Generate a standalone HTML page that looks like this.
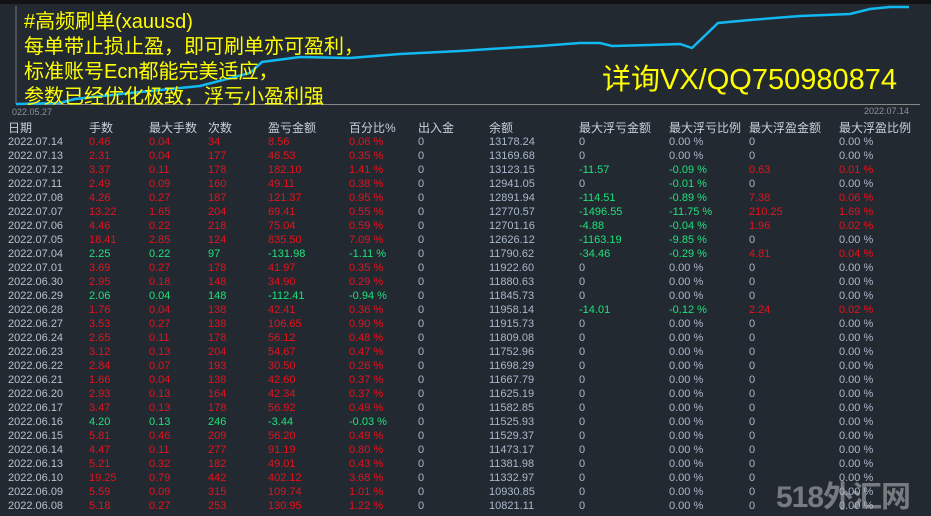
<!DOCTYPE html><html><head><meta charset="utf-8"><style>
body{margin:0;width:931px;height:513px;background:#232931;overflow:hidden;position:relative;font-family:"Liberation Sans","Noto Sans CJK SC",sans-serif}
.top{position:absolute;left:0;top:0;width:931px;height:4px;background:#121212}
.t{position:absolute;left:0;top:121px;width:931px}
.r{height:14px;line-height:14px;font-size:11px;position:relative;color:#a9b8cc;white-space:nowrap}
.r span{position:absolute;top:0}
.h{color:#c8d0dc;font-size:12px}
.c1{left:8px;color:#b7c0cc}.c2{left:89px}.c3{left:149px}.c4{left:208px}.c5{left:268px}.c6{left:349px}.c7{left:418px}.c8{left:489px}.c9{left:579px}.c10{left:669px}.c11{left:749px}.c12{left:839px}
.R .c2,.R .c3,.R .c4,.R .c5,.R .c6{color:#e5121c}
.G .c2,.G .c3,.G .c4,.G .c5,.G .c6{color:#1ee27a}
.g{color:#1ee27a!important}.x{color:#e5121c!important}
.y{position:absolute;color:#ffff00;font-size:20px;left:24px;line-height:25px}
</style></head><body>
<div class="top"></div>
<svg width="931" height="120" style="position:absolute;left:0;top:0">
<line x1="16" y1="6" x2="16" y2="104" stroke="#777" stroke-width="1"/>
<line x1="16" y1="104.5" x2="920" y2="104.5" stroke="#888" stroke-width="1"/>
<polyline fill="none" stroke="#12b8f0" stroke-width="2.5" points="16,104 60,103 75,99 130,93 200,86 250,73 262,62 300,57 350,58 400,54 460,51 490,49 540,46 580,43 600,43 612,46 650,45 680,44 692,48 718,23 750,20 800,16 850,14 870,9 890,7 909,7"/>
<text x="12" y="115" font-size="9" fill="#8a929c" font-family="Liberation Sans">022.05.27</text>
<text x="864" y="114" font-size="9" fill="#8a929c" font-family="Liberation Sans">2022.07.14</text>
</svg>
<div class="y" style="top:10px">#高频刷单(xauusd)</div>
<div class="y" style="top:35px">每单带止损止盈，即可刷单亦可盈利，</div>
<div class="y" style="top:60px">标准账号Ecn都能完美适应，</div>
<div class="y" style="top:85px">参数已经优化极致，浮亏小盈利强</div>
<div style="position:absolute;left:602px;top:62px;color:#ffff00;font-size:29px;line-height:36px">详询VX/QQ750980874</div>
<div class="t">
<div class="r h"><span class="c1" style="color:#c8d0dc">日期</span><span class="c2">手数</span><span class="c3">最大手数</span><span class="c4">次数</span><span class="c5">盈亏金额</span><span class="c6">百分比%</span><span class="c7">出入金</span><span class="c8">余额</span><span class="c9">最大浮亏金额</span><span class="c10">最大浮亏比例</span><span class="c11">最大浮盈金额</span><span class="c12">最大浮盈比例</span></div>
<div class="r R"><span class="c1">2022.07.14</span><span class="c2">0.46</span><span class="c3">0.04</span><span class="c4">34</span><span class="c5">8.56</span><span class="c6">0.06 %</span><span class="c7">0</span><span class="c8">13178.24</span><span class="c9">0</span><span class="c10">0.00 %</span><span class="c11">0</span><span class="c12">0.00 %</span></div>
<div class="r R"><span class="c1">2022.07.13</span><span class="c2">2.31</span><span class="c3">0.04</span><span class="c4">177</span><span class="c5">46.53</span><span class="c6">0.35 %</span><span class="c7">0</span><span class="c8">13169.68</span><span class="c9">0</span><span class="c10">0.00 %</span><span class="c11">0</span><span class="c12">0.00 %</span></div>
<div class="r R"><span class="c1">2022.07.12</span><span class="c2">3.37</span><span class="c3">0.11</span><span class="c4">178</span><span class="c5">182.10</span><span class="c6">1.41 %</span><span class="c7">0</span><span class="c8">13123.15</span><span class="c9 g">-11.57</span><span class="c10 g">-0.09 %</span><span class="c11 x">0.63</span><span class="c12 x">0.01 %</span></div>
<div class="r R"><span class="c1">2022.07.11</span><span class="c2">2.49</span><span class="c3">0.09</span><span class="c4">160</span><span class="c5">49.11</span><span class="c6">0.38 %</span><span class="c7">0</span><span class="c8">12941.05</span><span class="c9">0</span><span class="c10 g">-0.01 %</span><span class="c11">0</span><span class="c12">0.00 %</span></div>
<div class="r R"><span class="c1">2022.07.08</span><span class="c2">4.26</span><span class="c3">0.27</span><span class="c4">187</span><span class="c5">121.37</span><span class="c6">0.95 %</span><span class="c7">0</span><span class="c8">12891.94</span><span class="c9 g">-114.51</span><span class="c10 g">-0.89 %</span><span class="c11 x">7.38</span><span class="c12 x">0.06 %</span></div>
<div class="r R"><span class="c1">2022.07.07</span><span class="c2">13.22</span><span class="c3">1.65</span><span class="c4">204</span><span class="c5">69.41</span><span class="c6">0.55 %</span><span class="c7">0</span><span class="c8">12770.57</span><span class="c9 g">-1496.55</span><span class="c10 g">-11.75 %</span><span class="c11 x">210.25</span><span class="c12 x">1.69 %</span></div>
<div class="r R"><span class="c1">2022.07.06</span><span class="c2">4.46</span><span class="c3">0.22</span><span class="c4">218</span><span class="c5">75.04</span><span class="c6">0.59 %</span><span class="c7">0</span><span class="c8">12701.16</span><span class="c9 g">-4.88</span><span class="c10 g">-0.04 %</span><span class="c11 x">1.96</span><span class="c12 x">0.02 %</span></div>
<div class="r R"><span class="c1">2022.07.05</span><span class="c2">18.41</span><span class="c3">2.85</span><span class="c4">124</span><span class="c5">835.50</span><span class="c6">7.09 %</span><span class="c7">0</span><span class="c8">12626.12</span><span class="c9 g">-1163.19</span><span class="c10 g">-9.85 %</span><span class="c11">0</span><span class="c12">0.00 %</span></div>
<div class="r G"><span class="c1">2022.07.04</span><span class="c2">2.25</span><span class="c3">0.22</span><span class="c4">97</span><span class="c5">-131.98</span><span class="c6">-1.11 %</span><span class="c7">0</span><span class="c8">11790.62</span><span class="c9 g">-34.46</span><span class="c10 g">-0.29 %</span><span class="c11 x">4.81</span><span class="c12 x">0.04 %</span></div>
<div class="r R"><span class="c1">2022.07.01</span><span class="c2">3.69</span><span class="c3">0.27</span><span class="c4">178</span><span class="c5">41.97</span><span class="c6">0.35 %</span><span class="c7">0</span><span class="c8">11922.60</span><span class="c9">0</span><span class="c10">0.00 %</span><span class="c11">0</span><span class="c12">0.00 %</span></div>
<div class="r R"><span class="c1">2022.06.30</span><span class="c2">2.95</span><span class="c3">0.18</span><span class="c4">148</span><span class="c5">34.90</span><span class="c6">0.29 %</span><span class="c7">0</span><span class="c8">11880.63</span><span class="c9">0</span><span class="c10">0.00 %</span><span class="c11">0</span><span class="c12">0.00 %</span></div>
<div class="r G"><span class="c1">2022.06.29</span><span class="c2">2.06</span><span class="c3">0.04</span><span class="c4">148</span><span class="c5">-112.41</span><span class="c6">-0.94 %</span><span class="c7">0</span><span class="c8">11845.73</span><span class="c9">0</span><span class="c10">0.00 %</span><span class="c11">0</span><span class="c12">0.00 %</span></div>
<div class="r R"><span class="c1">2022.06.28</span><span class="c2">1.76</span><span class="c3">0.04</span><span class="c4">138</span><span class="c5">42.41</span><span class="c6">0.36 %</span><span class="c7">0</span><span class="c8">11958.14</span><span class="c9 g">-14.01</span><span class="c10 g">-0.12 %</span><span class="c11 x">2.24</span><span class="c12 x">0.02 %</span></div>
<div class="r R"><span class="c1">2022.06.27</span><span class="c2">3.53</span><span class="c3">0.27</span><span class="c4">138</span><span class="c5">106.65</span><span class="c6">0.90 %</span><span class="c7">0</span><span class="c8">11915.73</span><span class="c9">0</span><span class="c10">0.00 %</span><span class="c11">0</span><span class="c12">0.00 %</span></div>
<div class="r R"><span class="c1">2022.06.24</span><span class="c2">2.65</span><span class="c3">0.11</span><span class="c4">178</span><span class="c5">56.12</span><span class="c6">0.48 %</span><span class="c7">0</span><span class="c8">11809.08</span><span class="c9">0</span><span class="c10">0.00 %</span><span class="c11">0</span><span class="c12">0.00 %</span></div>
<div class="r R"><span class="c1">2022.06.23</span><span class="c2">3.12</span><span class="c3">0.13</span><span class="c4">204</span><span class="c5">54.67</span><span class="c6">0.47 %</span><span class="c7">0</span><span class="c8">11752.96</span><span class="c9">0</span><span class="c10">0.00 %</span><span class="c11">0</span><span class="c12">0.00 %</span></div>
<div class="r R"><span class="c1">2022.06.22</span><span class="c2">2.84</span><span class="c3">0.07</span><span class="c4">193</span><span class="c5">30.50</span><span class="c6">0.26 %</span><span class="c7">0</span><span class="c8">11698.29</span><span class="c9">0</span><span class="c10">0.00 %</span><span class="c11">0</span><span class="c12">0.00 %</span></div>
<div class="r R"><span class="c1">2022.06.21</span><span class="c2">1.66</span><span class="c3">0.04</span><span class="c4">138</span><span class="c5">42.60</span><span class="c6">0.37 %</span><span class="c7">0</span><span class="c8">11667.79</span><span class="c9">0</span><span class="c10">0.00 %</span><span class="c11">0</span><span class="c12">0.00 %</span></div>
<div class="r R"><span class="c1">2022.06.20</span><span class="c2">2.93</span><span class="c3">0.13</span><span class="c4">164</span><span class="c5">42.34</span><span class="c6">0.37 %</span><span class="c7">0</span><span class="c8">11625.19</span><span class="c9">0</span><span class="c10">0.00 %</span><span class="c11">0</span><span class="c12">0.00 %</span></div>
<div class="r R"><span class="c1">2022.06.17</span><span class="c2">3.47</span><span class="c3">0.13</span><span class="c4">178</span><span class="c5">56.92</span><span class="c6">0.49 %</span><span class="c7">0</span><span class="c8">11582.85</span><span class="c9">0</span><span class="c10">0.00 %</span><span class="c11">0</span><span class="c12">0.00 %</span></div>
<div class="r G"><span class="c1">2022.06.16</span><span class="c2">4.20</span><span class="c3">0.13</span><span class="c4">246</span><span class="c5">-3.44</span><span class="c6">-0.03 %</span><span class="c7">0</span><span class="c8">11525.93</span><span class="c9">0</span><span class="c10">0.00 %</span><span class="c11">0</span><span class="c12">0.00 %</span></div>
<div class="r R"><span class="c1">2022.06.15</span><span class="c2">5.81</span><span class="c3">0.46</span><span class="c4">209</span><span class="c5">56.20</span><span class="c6">0.49 %</span><span class="c7">0</span><span class="c8">11529.37</span><span class="c9">0</span><span class="c10">0.00 %</span><span class="c11">0</span><span class="c12">0.00 %</span></div>
<div class="r R"><span class="c1">2022.06.14</span><span class="c2">4.47</span><span class="c3">0.11</span><span class="c4">277</span><span class="c5">91.19</span><span class="c6">0.80 %</span><span class="c7">0</span><span class="c8">11473.17</span><span class="c9">0</span><span class="c10">0.00 %</span><span class="c11">0</span><span class="c12">0.00 %</span></div>
<div class="r R"><span class="c1">2022.06.13</span><span class="c2">5.21</span><span class="c3">0.32</span><span class="c4">182</span><span class="c5">49.01</span><span class="c6">0.43 %</span><span class="c7">0</span><span class="c8">11381.98</span><span class="c9">0</span><span class="c10">0.00 %</span><span class="c11">0</span><span class="c12">0.00 %</span></div>
<div class="r R"><span class="c1">2022.06.10</span><span class="c2">19.25</span><span class="c3">0.79</span><span class="c4">442</span><span class="c5">402.12</span><span class="c6">3.68 %</span><span class="c7">0</span><span class="c8">11332.97</span><span class="c9">0</span><span class="c10">0.00 %</span><span class="c11">0</span><span class="c12">0.00 %</span></div>
<div class="r R"><span class="c1">2022.06.09</span><span class="c2">5.59</span><span class="c3">0.09</span><span class="c4">315</span><span class="c5">109.74</span><span class="c6">1.01 %</span><span class="c7">0</span><span class="c8">10930.85</span><span class="c9">0</span><span class="c10">0.00 %</span><span class="c11">0</span><span class="c12">0.00 %</span></div>
<div class="r R"><span class="c1">2022.06.08</span><span class="c2">5.18</span><span class="c3">0.27</span><span class="c4">253</span><span class="c5">130.95</span><span class="c6">1.22 %</span><span class="c7">0</span><span class="c8">10821.11</span><span class="c9">0</span><span class="c10">0.00 %</span><span class="c11">0</span><span class="c12">0.00 %</span></div>
</div>
<div style="position:absolute;left:776px;top:472px;font-size:30px;color:rgba(190,190,190,0.55);font-weight:bold;letter-spacing:-1px">518外汇网</div>
</body></html>
